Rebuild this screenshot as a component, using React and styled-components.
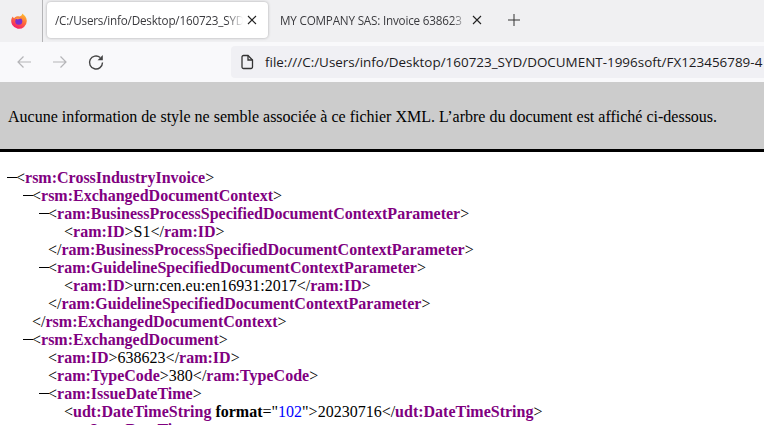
import styled, { createGlobalStyle } from "styled-components";

const Global = createGlobalStyle`
  html, body { margin: 0; padding: 0; background: #fff; overflow: hidden; }
`;

const Page = styled.div`
  width: 764px;
  height: 425px;
  overflow: hidden;
`;

const TabStrip = styled.div`
  height: 42px;
  background: #f0f0f2;
  display: flex;
  align-items: flex-start;
`;

const LogoSlot = styled.div`
  width: 43px;
  height: 42px;
  flex: none;
  display: flex;
  align-items: center;
  justify-content: center;
  border-right: 1px solid #b4b4b6;
  box-sizing: border-box;
  padding-right: 5px;
`;

const Tab = styled.div`
  width: 221px;
  height: 36px;
  margin: 2px 0 0 ${p => p.$left}px;
  flex: none;
  box-sizing: border-box;
  padding: 0 11px 0 8px;
  display: flex;
  align-items: center;
  border-radius: 4px;
  background: ${p => (p.$active ? "#fff" : "transparent")};
  box-shadow: ${p => (p.$active ? "0 0 3px rgba(0,0,0,.3)" : "none")};
  color: #3a3a3e;
  font: 11.7px "Open Sans", sans-serif;
  letter-spacing: -0.2px;
`;

const TabTitle = styled.div`
  flex: 1;
  overflow: hidden;
  white-space: nowrap;
  mask-image: linear-gradient(to left, transparent, #000 16px);
`;

const CloseSvg = styled.svg`
  flex: none;
  margin-left: 4px;
`;

const CloseIcon = () => (
  <CloseSvg width="10" height="10" viewBox="0 0 10 10">
    <path d="M1 1l8 8M9 1l-8 8" stroke="#222" strokeWidth="1.1" />
  </CloseSvg>
);

const PlusButton = styled.div`
  margin: 13px 0 0 14px;
  width: 14px;
  height: 14px;
  flex: none;
`;

const NavBar = styled.div`
  height: 40px;
  background: #f9f9fb;
  display: flex;
  align-items: center;
  padding-left: 15px;
  box-sizing: border-box;
`;

const NavButton = styled.div`
  width: 18px;
  height: 18px;
  margin-right: ${p => p.$gap}px;
  flex: none;
`;

const UrlBox = styled.div`
  flex: 1;
  min-width: 0;
  height: 32px;
  margin-left: 126px;
  background: #f0f0f4;
  border-radius: 4px 0 0 4px;
  display: flex;
  align-items: center;
  padding-left: 9px;
  overflow: hidden;
  white-space: nowrap;
  color: #1c1b22;
  font: 13.45px "Open Sans", sans-serif;
`;

const DocIcon = styled.svg`
  flex: none;
`;

const UrlText = styled.span`
  margin-left: 11px;
  flex: none;
`;

const Notice = styled.div`
  height: 65px;
  background: #ccc;
  border-bottom: 3px solid #000;
  display: flex;
  align-items: center;
  padding: 2px 0 0 8px;
  color: #000;
  font: 16px/18px "Liberation Serif", serif;
`;

const Tree = styled.div`
  padding-top: 17px;
  font: 16px/18px "Liberation Serif", serif;
  color: #000;
`;

const Row = styled.div`
  position: relative;
  height: 18px;
  padding-left: ${p => p.$level * 16 + 16}px;
  white-space: nowrap;
  ${p => p.$collapsible && `
    &::before {
      content: "";
      position: absolute;
      left: ${p.$level * 16 + 7}px;
      top: 8px;
      width: 10px;
      height: 1px;
      background: #000;
    }
  `}
`;

const Name = styled.span`
  color: #800080;
  font-weight: bold;
`;

const Attr = styled.span`
  font-weight: bold;
`;

const Value = styled.span`
  color: #00f;
`;

const rows = [
  { l: 0, c: 1, o: "rsm:CrossIndustryInvoice" },
  { l: 1, c: 1, o: "rsm:ExchangedDocumentContext" },
  { l: 2, c: 1, o: "ram:BusinessProcessSpecifiedDocumentContextParameter" },
  { l: 3, o: "ram:ID", t: "S1" },
  { l: 2, e: "ram:BusinessProcessSpecifiedDocumentContextParameter" },
  { l: 2, c: 1, o: "ram:GuidelineSpecifiedDocumentContextParameter" },
  { l: 3, o: "ram:ID", t: "urn:cen.eu:en16931:2017" },
  { l: 2, e: "ram:GuidelineSpecifiedDocumentContextParameter" },
  { l: 1, e: "rsm:ExchangedDocumentContext" },
  { l: 1, c: 1, o: "rsm:ExchangedDocument" },
  { l: 2, o: "ram:ID", t: "638623" },
  { l: 2, o: "ram:TypeCode", t: "380" },
  { l: 2, c: 1, o: "ram:IssueDateTime" },
  { l: 3, o: "udt:DateTimeString", attr: ["format", "102"], t: "20230716" },
  { l: 2, c: 1, o: "ram:IssueDateTime" },
];

const App = () => (
  <Page>
    <Global />
    <TabStrip>
      <LogoSlot>
        <svg width="16" height="16" viewBox="0 0 16 16">
          <defs>
            <linearGradient id="fox" x1="0.8" y1="0" x2="0.3" y2="1">
              <stop offset="0" stopColor="#ffc22e" />
              <stop offset="0.45" stopColor="#ff7139" />
              <stop offset="1" stopColor="#f5156c" />
            </linearGradient>
          </defs>
          <path d="M11 .5c3 1.800 4.800 4.500 4.800 7.500A7.800 7.800 0 1 1 .6 5.500C1 4.500 1.500 4 2 3.500c.2 1 .6 1.500 1.200 1.800C4.500 3.500 6.500 3 8.500 3.500 10.500 3 11.300 2 11 .5z" fill="url(#fox)" />
          <circle cx="7.800" cy="8.200" r="3.500" fill="#7a2fd0" />
          <path d="M4 5.500c2-1.500 5-1.200 6.500.5-1.500-.4-3 0-3.500.6C6 6.200 5 5.800 4 5.500z" fill="#ff9640" />
        </svg>
      </LogoSlot>
      <Tab $active $left={4}>
        <TabTitle>/C:/Users/info/Desktop/160723_SYD</TabTitle>
        <CloseIcon />
      </Tab>
      <Tab $left={4}>
        <TabTitle>MY COMPANY SAS: Invoice 638623</TabTitle>
        <CloseIcon />
      </Tab>
      <PlusButton>
        <svg width="14" height="14" viewBox="0 0 14 14">
          <path d="M7 1v12M1 7h12" stroke="#333" strokeWidth="1" />
        </svg>
      </PlusButton>
    </TabStrip>
    <NavBar>
      <NavButton $gap={18}>
        <svg width="18" height="18" viewBox="0 0 18 18" fill="none" stroke="#b5b5b8" strokeWidth="1.2">
          <path d="M3 9h13M8.500 3.500L3 9l5.500 5.500" />
        </svg>
      </NavButton>
      <NavButton $gap={18}>
        <svg width="18" height="18" viewBox="0 0 18 18" fill="none" stroke="#b5b5b8" strokeWidth="1.2">
          <path d="M2 9h13M9.500 3.500L15 9l-5.500 5.500" />
        </svg>
      </NavButton>
      <NavButton $gap={0}>
        <svg width="18" height="18" viewBox="0 0 18 18" fill="none" stroke="#444" strokeWidth="1.4">
          <path d="M15.500 9.500a6.500 6.500 0 1 1-2.300-5" />
          <path d="M15.800 2v5.200h-5.200z" fill="#444" stroke="none" />
        </svg>
      </NavButton>
      <UrlBox>
        <DocIcon width="14" height="16" viewBox="0 0 14 16" fill="none" stroke="#333" strokeWidth="1.3">
          <path d="M2 3a1.500 1.500 0 0 1 1.500-1.500H8L12.500 6v7a1.500 1.500 0 0 1-1.500 1.500H3.500A1.500 1.500 0 0 1 2 13z" />
          <path d="M8 1.500V6h4.500" />
        </DocIcon>
        <UrlText>file:///C:/Users/info/Desktop/160723_SYD/DOCUMENT-1996soft/FX123456789-4</UrlText>
      </UrlBox>
    </NavBar>
    <Notice>Aucune information de style ne semble associée à ce fichier XML. L’arbre du document est affiché ci-dessous.</Notice>
    <Tree>
      {rows.map((r, i) => (
        <Row key={i} $level={r.l} $collapsible={r.c}>
          &lt;{r.e && "/"}<Name>{r.o || r.e}</Name>
          {r.attr && (
            <>
              {" "}<Attr>{r.attr[0]}</Attr>="<Value>{r.attr[1]}</Value>"
            </>
          )}
          &gt;
          {r.t && (
            <>
              {r.t}&lt;/<Name>{r.o}</Name>&gt;
            </>
          )}
        </Row>
      ))}
    </Tree>
  </Page>
);

export default App;
